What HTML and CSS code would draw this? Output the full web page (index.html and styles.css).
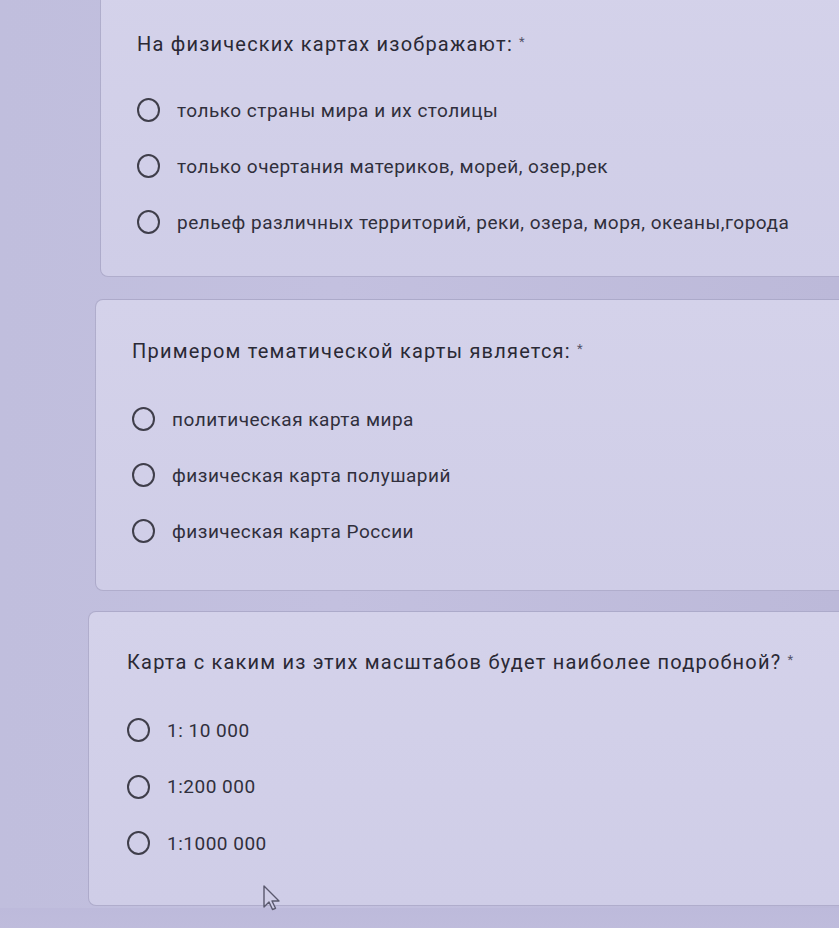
FILE: index.html
```html
<!DOCTYPE html>
<html lang="ru">
<head>
<meta charset="utf-8">
<title>Форма</title>
<link rel="stylesheet" href="styles.css">
</head>
<body>
<div class="page">
  <section class="card card-1">
    <div class="question">На физических картах изображают: <span class="req">*</span></div>
    <ul class="options">
      <li class="option"><span class="radio"></span><span>только страны мира и их столицы</span></li>
      <li class="option"><span class="radio"></span><span>только очертания материков, морей, озер,рек</span></li>
      <li class="option"><span class="radio"></span><span>рельеф различных территорий, реки, озера, моря, океаны,города</span></li>
    </ul>
  </section>
  <section class="card card-2">
    <div class="question">Примером тематической карты является: <span class="req">*</span></div>
    <ul class="options">
      <li class="option"><span class="radio"></span><span>политическая карта мира</span></li>
      <li class="option"><span class="radio"></span><span>физическая карта полушарий</span></li>
      <li class="option"><span class="radio"></span><span>физическая карта России</span></li>
    </ul>
  </section>
  <section class="card card-3">
    <div class="question">Карта с каким из этих масштабов будет наиболее подробной? <span class="req">*</span></div>
    <ul class="options">
      <li class="option"><span class="radio"></span><span>1: 10 000</span></li>
      <li class="option"><span class="radio"></span><span>1:200 000</span></li>
      <li class="option"><span class="radio"></span><span>1:1000 000</span></li>
    </ul>
  </section>
  <div class="bottom-band"></div>
</div>
<svg class="cursor" width="20" height="28" viewBox="0 0 20 28">
  <path d="M2 2 L2 23 L7 18 L10.5 25.5 L13.5 24.3 L10 17 L17 17 Z" fill="#d0cee7" stroke="#5a596e" stroke-width="1.4" stroke-linejoin="round"/>
</svg>
</body>
</html>
```

FILE: styles.css
```css
html, body {
  margin: 0;
  padding: 0;
}

body {
  width: 839px;
  height: 928px;
  overflow: hidden;
  position: relative;
  background: linear-gradient(90deg, #c0bedd 0%, #c3c0df 40%, #bcb9d9 100%);
  font-family: Roboto, "Noto Sans", "Liberation Sans", sans-serif;
  color: #34333f;
}

.page {
  display: flex;
  flex-direction: column;
  margin-top: -20px;
}

.card {
  background: linear-gradient(180deg, #d4d2ea 0%, #cfcde7 100%);
  border: 1px solid rgba(110, 108, 150, 0.35);
  border-right: none;
  border-radius: 8px 0 0 8px;
  padding-left: 36px;
}

.card-1 {
  margin-left: 100px;
  padding-top: 49px;
  padding-bottom: 26px;
}

.card-1 .options {
  margin-top: 26px;
}

.card-2 {
  margin-left: 95px;
  margin-top: 22px;
  padding-top: 37px;
  padding-bottom: 31px;
}

.card-2 .options {
  margin-top: 28px;
}

.card-3 {
  margin-left: 88px;
  margin-top: 20px;
  padding-top: 36px;
  padding-bottom: 33px;
  padding-left: 38px;
}

.card-3 .options {
  margin-top: 28px;
}

.card-3 .option {
  height: 56.5px;
}

.question {
  font-size: 20px;
  line-height: 24px;
  letter-spacing: 1.2px;
  color: #2a2935;
}

.req {
  font-size: 13px;
  vertical-align: 5px;
  letter-spacing: 0;
  color: #55546a;
}

.options {
  list-style: none;
  margin: 27px 0 0 0;
  padding: 0;
}

.option {
  display: flex;
  align-items: center;
  height: 56px;
  font-size: 19px;
  letter-spacing: 0.5px;
  color: #302f3c;
}

.radio {
  width: 19px;
  height: 20px;
  border: 2.5px solid #3f3e4a;
  border-radius: 50%;
  margin-right: 17px;
  flex-shrink: 0;
}

.bottom-band {
  height: 60px;
  margin-top: 2px;
  background: linear-gradient(180deg, #bdbadb 0%, #c2bfdd 80%, #9e9bc0 100%);
}

.cursor {
  position: absolute;
  left: 262px;
  top: 884px;
}
```
